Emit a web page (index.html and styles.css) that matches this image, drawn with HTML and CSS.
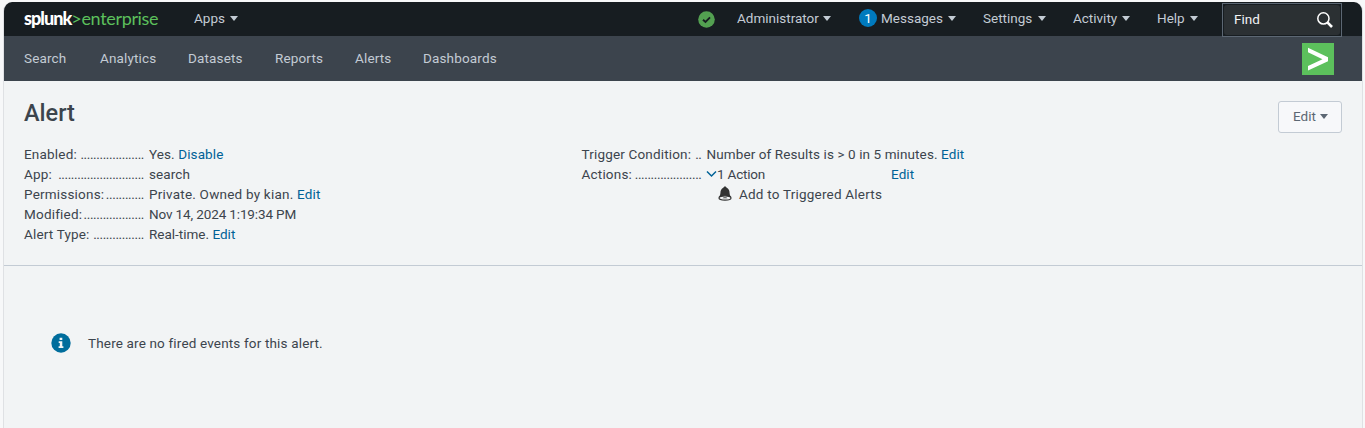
FILE: index.html
```html
<!DOCTYPE html>
<html lang="en">
<head>
<meta charset="utf-8">
<title>Alert</title>
<link rel="stylesheet" href="styles.css">
</head>
<body>
<div class="window">
  <header class="topbar">
    <a class="brand"><span class="brand-name">splunk</span><span class="brand-mark">&gt;</span><span class="brand-product">enterprise</span></a>
    <a class="menu menu-apps">Apps<i class="caret"></i></a>
    <span class="spacer"></span>
    <svg class="health" viewBox="0 0 17 17"><circle cx="8.5" cy="8.5" r="8.3" fill="#53a051"/><path d="M5 8.7 7.5 11 12 6.4" fill="none" stroke="#171d21" stroke-width="1.9"/></svg>
    <a class="menu menu-admin">Administrator<i class="caret"></i></a>
    <a class="menu menu-messages"><span class="count">1</span><span>Messages</span><i class="caret"></i></a>
    <a class="menu menu-settings">Settings<i class="caret"></i></a>
    <a class="menu menu-activity">Activity<i class="caret"></i></a>
    <a class="menu menu-help">Help<i class="caret"></i></a>
    <div class="find"><div class="find-inner"><span>Find</span><svg class="lens" viewBox="0 0 16 16"><circle cx="6.4" cy="6.4" r="5.6" fill="none" stroke="#fff" stroke-width="1.5"/><path d="M10.4 10.4 15 15" stroke="#fff" stroke-width="2.6"/></svg></div></div>
  </header>
  <nav class="appbar">
    <a class="nav-search">Search</a><a class="nav-analytics">Analytics</a><a class="nav-datasets">Datasets</a><a class="nav-reports">Reports</a><a class="nav-alerts">Alerts</a><a class="nav-dashboards">Dashboards</a>
    <svg class="app-icon" viewBox="0 0 32 32"><rect width="32" height="32" fill="#5cc05c"/><path d="M6 4.800 26 14.300v4L6 27.600v-4.500l14.500-6.800L6 9.300z" fill="#fff"/></svg>
  </nav>
  <main>
    <section class="summary">
      <div class="heading"><h1>Alert</h1><button class="edit-button">Edit<i class="caret"></i></button></div>
      <div class="details">
        <dl class="column">
          <dt><span>Enabled:</span><i class="dots">....................</i></dt><dd>Yes. <a>Disable</a></dd>
          <dt><span>App:</span><i class="dots">...........................</i></dt><dd>search</dd>
          <dt><span>Permissions:</span><i class="dots">............</i></dt><dd class="wide">Private. Owned by kian. <a>Edit</a></dd>
          <dt><span>Modified:</span><i class="dots">...................</i></dt><dd class="date">Nov 14, 2024 1:19:34 PM</dd>
          <dt class="long"><span>Alert Type:</span><i class="dots">................</i></dt><dd class="live">Real-time. <a>Edit</a></dd>
        </dl>
        <dl class="column">
          <dt class="long"><span>Trigger Condition:</span><i class="dots">..</i></dt><dd>Number of Results is &gt; 0 in 5 minutes. <a>Edit</a></dd>
          <dt><span>Actions:</span><i class="dots">.....................</i></dt>
          <dd class="actions">
            <div class="action-row"><svg class="chevron" viewBox="0 0 11 8"><path d="M1 1.5 5.5 6 10 1.500" fill="none" stroke="#006297" stroke-width="1.500"/></svg><span class="action-count">1 Action</span><a>Edit</a></div>
            <div class="action-item"><svg class="bell" viewBox="0 0 14 16"><path d="M7 .5c1 0 1.500.6 1.600 1.300 2 .8 2.900 2.600 3 5.100.1 1.700.6 2.900 1.700 4.100H.7c1.100-1.200 1.600-2.400 1.700-4.100.1-2.500 1-4.300 3-5.100C5.500 1.100 6 .5 7 .5z" fill="#333"/><ellipse cx="7" cy="12" rx="6" ry="2.200" fill="#f2f4f5" stroke="#333" stroke-width="1.200"/><path d="M4.500 12.300a2.700 1.500 0 0 1 5 0z" fill="#333"/></svg><span>Add to Triggered Alerts</span></div>
          </dd>
        </dl>
      </div>
    </section>
    <section class="notice"><svg class="info" viewBox="0 0 20 20"><circle cx="10" cy="10" r="9.700" fill="#006d9c"/><path d="M8.600 4.700h2.700v2.200H8.600zM7.700 8.200h3.600v5h1.100v1.700H7.600v-1.700h1.200V9.900H7.700z" fill="#f2f4f5"/></svg><span>There are no fired events for this alert.</span></section>
  </main>
</div>
</body>
</html>
```
FILE: styles.css
```css
* { box-sizing: border-box; }
body { margin: 0; height: 428px; overflow: hidden; background: #f7f8f9; font: 13.5px/20px Roboto, "Liberation Sans", sans-serif; color: #3c444d; }
i { font-style: normal; }
a { color: #006297; text-decoration: none; }
.window { margin: 2px 2px 0 3px; height: 440px; border: 1px solid #dfe1e4; border-top: 0; border-radius: 9px 9px 0 0; overflow: hidden; background: #f2f4f5; }
.topbar { display: flex; align-items: center; height: 34px; padding-left: 20px; background: #171d21; }
.topbar a { color: #c3cbd4; }
.topbar .brand { display: flex; width: 170px; padding-bottom: 2px; font: 18px/32px Lato, sans-serif; letter-spacing: -0.34px; }
.brand-name { color: #fff; font-weight: 900; letter-spacing: -0.95px; }
.brand-mark, .brand-product { color: #5cc05c; }
.menu { display: flex; align-items: center; padding-bottom: 2px; white-space: nowrap; }
.caret { flex: none; width: 0; height: 0; margin-left: auto; border: 4px solid transparent; border-top: 5px solid currentColor; border-bottom: 0; }
.menu-apps { width: 44px; }
.spacer { flex: 1; }
.health { width: 17px; height: 17px; margin-right: 22px; }
.menu-admin { width: 94px; margin-right: 28px; }
.menu-messages { width: 97px; margin-right: 27px; }
.count { width: 18px; height: 18px; margin-right: 4px; border-radius: 50%; background: #007abd; color: #fff; text-align: center; line-height: 18px; }
.menu-settings { width: 63px; margin-right: 27px; }
.menu-activity { width: 57px; margin-right: 27px; }
.menu-help { width: 41px; margin-right: 24px; }
.find { width: 120px; height: 34px; margin-right: 20px; padding: 1px; border: 1px solid #5c6773; color: #f2f4f5; align-self: flex-end; margin-bottom: -1px; position: relative; }
.find-inner { display: flex; align-items: center; justify-content: space-between; height: 30px; padding: 0 7px 0 10px; border-radius: 3px; background: #2b3033; }
.find-inner span { padding-bottom: 2px; }
.lens { width: 16px; height: 16px; }
.appbar { display: flex; align-items: center; height: 45px; padding: 0 28px 0 20px; background: #3c444d; }
.appbar a { padding-bottom: 2px; color: #c3cbd4; letter-spacing: 0.15px; white-space: nowrap; }
.nav-search { width: 76px; }
.nav-analytics { width: 88px; }
.nav-datasets { width: 87px; }
.nav-reports { width: 80px; }
.nav-alerts { width: 68px; }
.app-icon { width: 32px; height: 32px; margin-left: auto; }
.summary { height: 185px; padding: 20px 20px 0; border-bottom: 1px solid #c3cbd4; }
.heading { display: flex; justify-content: space-between; height: 43px; }
h1 { margin: 0; font-size: 23.5px; line-height: 24px; font-weight: 500; }
.edit-button { display: flex; align-items: center; width: 64px; height: 32px; padding: 0 13px 2px 14px; border: 1px solid #c3cbd4; border-radius: 3px; background: #f7f8fa; color: #5c6773; font: inherit; }
.details { display: grid; grid-template-columns: 557.5px 1fr; }
.column { display: grid; grid-template-columns: 120px 1fr; column-gap: 5px; align-content: start; margin: 0; letter-spacing: 0.1px; white-space: nowrap; }
dt { display: flex; justify-content: space-between; letter-spacing: 0.2px; }
dt.long { letter-spacing: 0.17px; }
dd { margin: 0; }
dd.wide { letter-spacing: 0.22px; }
dd.live { letter-spacing: 0; }
dd.date { letter-spacing: -0.13px; }
.dots { letter-spacing: -0.38px; }
.action-row { display: flex; align-items: center; }
.chevron { width: 11px; height: 8px; margin-left: -0.5px; }
.action-count { width: 174px; letter-spacing: -0.2px; }
.action-item { display: flex; align-items: center; gap: 7.5px; padding-left: 11px; letter-spacing: 0.21px; }
.bell { width: 14px; height: 16px; }
.notice { display: flex; align-items: center; gap: 17px; height: 20px; margin: 67px 0 0 47px; letter-spacing: 0.16px; }
.info { width: 20px; height: 20px; }
```
